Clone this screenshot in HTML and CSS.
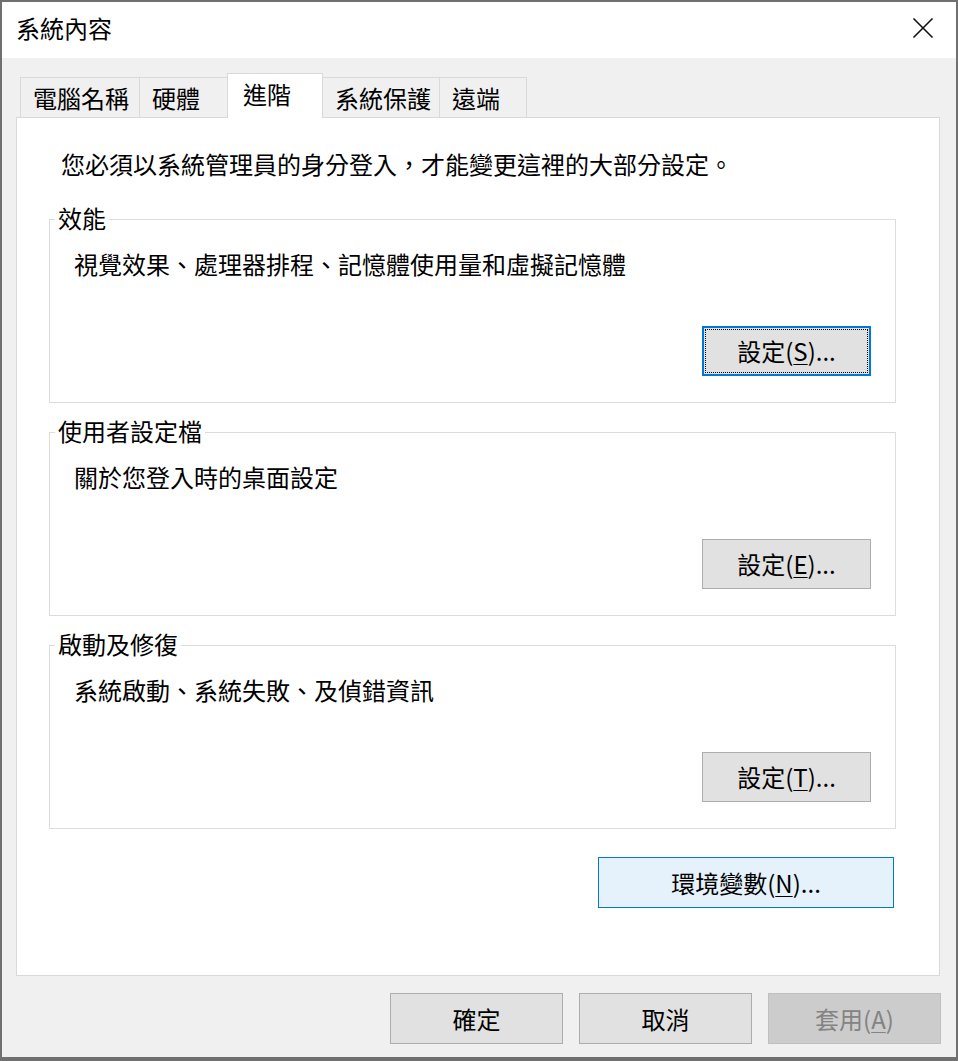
FILE: index.html
```html
<!DOCTYPE html>
<html lang="zh-Hant">
<head>
<meta charset="utf-8">
<title>系統內容</title>
<link rel="stylesheet" href="styles.css">
</head>
<body>
<div class="window">
  <div class="titlebar">
    <span class="title">系統內容</span>
    <svg class="close" width="22" height="22" viewBox="0 0 22 22" aria-hidden="true">
      <path d="M1.5 1.5 L20.5 20.5 M20.5 1.5 L1.5 20.5" stroke="#111" stroke-width="1.6" fill="none"/>
    </svg>
  </div>
  <div class="content">
    <div class="tabs">
      <div class="tab">電腦名稱</div>
      <div class="tab">硬體</div>
      <div class="tab selected">進階</div>
      <div class="tab">系統保護</div>
      <div class="tab">遠端</div>
    </div>
    <div class="panel">
      <p class="notice">您必須以系統管理員的身分登入，才能變更這裡的大部分設定。</p>

      <div class="group first">
        <span class="legend">效能</span>
        <p class="desc">視覺效果、處理器排程、記憶體使用量和虛擬記憶體</p>
        <div class="group-actions"><button class="btn focused"><span class="focus-rect">設定(<u>S</u>)...</span></button></div>
      </div>

      <div class="group">
        <span class="legend">使用者設定檔</span>
        <p class="desc">關於您登入時的桌面設定</p>
        <div class="group-actions"><button class="btn">設定(<u>E</u>)...</button></div>
      </div>

      <div class="group">
        <span class="legend">啟動及修復</span>
        <p class="desc">系統啟動、系統失敗、及偵錯資訊</p>
        <div class="group-actions"><button class="btn">設定(<u>T</u>)...</button></div>
      </div>

      <div class="env-row"><button class="btn env">環境變數(<u>N</u>)...</button></div>
    </div>
    <div class="footer">
      <button class="btn dlg">確定</button>
      <button class="btn dlg">取消</button>
      <button class="btn dlg disabled">套用(<u>A</u>)</button>
    </div>
  </div>
</div>
</body>
</html>
```

FILE: styles.css
```css
* { box-sizing: border-box; }

html, body {
  margin: 0;
  padding: 0;
  background: #6e6e6e;
}

body {
  font-family: "Noto Sans CJK TC", "Noto Sans", sans-serif;
  font-size: 24px;
  color: #000;
}

.window {
  width: 958px;
  height: 1061px;
  border: 2px solid #707070;
  border-bottom-width: 4px;
  background: #f0f0f0;
  display: flex;
  flex-direction: column;
}

.titlebar {
  height: 56px;
  background: #fff;
  display: flex;
  align-items: center;
  justify-content: space-between;
  padding: 0 22px 4px 14px;
  flex-shrink: 0;
}

.title {
  font-size: 24px;
  line-height: 24px;
}

.close {
  display: block;
  width: 22px;
  height: 22px;
  margin-top: 0;
}

.content {
  flex: 1;
  padding: 15px 15px 0 14px;
  display: flex;
  flex-direction: column;
}

.tabs {
  display: flex;
  align-items: flex-end;
  height: 44px;
  padding-left: 4px;
}

.tab {
  height: 40px;
  min-width: 88px;
  padding: 0 8px 0 12px;
  border: 1px solid #d9d9d9;
  border-bottom: none;
  border-right: none;
  background: #f0f0f0;
  line-height: 39px;
  white-space: nowrap;
}

.tab:first-child {
  padding-right: 10px;
}

.tab:nth-child(5) {
  border-right: 1px solid #d9d9d9;
}

.tab.selected {
  position: relative;
  z-index: 1;
  height: 45px;
  width: 96px;
  margin-bottom: -1px;
  padding: 0 0 5px 15px;
  background: #fff;
  border: 1px solid #d9d9d9;
  border-bottom: none;
  line-height: 39px;
}

.tab.selected + .tab {
  border-left: none;
}

.panel {
  width: 924px;
  height: 859px;
  background: #fff;
  border: 1px solid #d9d9d9;
  padding: 0 44px 0 32px;
}

.notice {
  margin: 34px 0 0 12px;
  line-height: 24px;
  white-space: nowrap;
}

.group {
  height: 184px;
  border: 1px solid #dcdcdc;
  margin: 29px 0 0 0;
  width: 847px;
  display: flex;
  flex-direction: column;
  align-items: flex-start;
  padding: 0 24px 26px 24px;
}

.group.first {
  margin-top: 43px;
}

.group + .group {
  margin-top: 29px;
}

.legend {
  display: inline-block;
  margin: -14px 0 0 -19px;
  padding: 0 3px;
  background: #fff;
  line-height: 24px;
  white-space: nowrap;
}

.desc {
  margin: 22px 0 0 0;
  line-height: 24px;
  white-space: nowrap;
}

.group-actions {
  margin-top: auto;
  align-self: stretch;
  display: flex;
  justify-content: flex-end;
}

.btn {
  font-family: inherit;
  font-size: 24px;
  color: #000;
  width: 169px;
  height: 50px;
  background: #e1e1e1;
  border: 1px solid #adadad;
  border-radius: 0;
  padding: 0;
  line-height: 24px;
  text-align: center;
  white-space: nowrap;
}

.btn u {
  text-decoration-thickness: 1px;
  text-underline-offset: 3px;
}

.btn.focused {
  border: 2px solid #0078d7;
  padding: 1px;
}

.focus-rect {
  display: flex;
  align-items: center;
  justify-content: center;
  width: 100%;
  height: 100%;
  border: 1px dotted #000;
}

.env-row {
  display: flex;
  justify-content: flex-end;
  margin-top: 28px;
}

.btn.env {
  width: 296px;
  height: 51px;
  background: #e5f1fb;
  border: 1px solid #0078d7;
  margin-right: 1px;
}

.footer {
  display: flex;
  justify-content: flex-end;
  gap: 16px;
  margin-top: 17px;
}

.btn.dlg {
  width: 173px;
  height: 51px;
}

.btn.disabled {
  background: #cccccc;
  border-color: #bfbfbf;
  color: #838383;
}
```
